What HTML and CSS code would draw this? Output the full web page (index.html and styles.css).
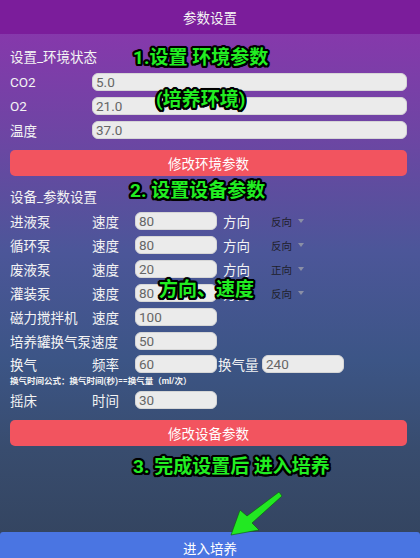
FILE: index.html
```html
<!DOCTYPE html>
<html lang="zh">
<head>
<meta charset="utf-8">
<title>参数设置</title>
<link rel="stylesheet" href="styles.css">
</head>
<body>
<div class="page">
  <header class="topbar">参数设置</header>
  <main class="content">
    <div class="section-title">设置_环境状态</div>
    <div class="env-row"><span class="lbl">CO2</span><div class="field grow">5.0</div></div>
    <div class="env-row"><span class="lbl">O2</span><div class="field grow">21.0</div></div>
    <div class="env-row"><span class="lbl">温度</span><div class="field grow">37.0</div></div>
    <div class="btn red">修改环境参数</div>

    <div class="section-title s2">设备_参数设置</div>
    <div class="dev-row"><span class="name">进液泵</span><span class="key">速度</span><div class="field sm">80</div><span class="dir">方向</span><span class="select">反向<span class="caret"></span></span></div>
    <div class="dev-row"><span class="name">循环泵</span><span class="key">速度</span><div class="field sm">80</div><span class="dir">方向</span><span class="select">反向<span class="caret"></span></span></div>
    <div class="dev-row"><span class="name">废液泵</span><span class="key">速度</span><div class="field sm">20</div><span class="dir">方向</span><span class="select">正向<span class="caret"></span></span></div>
    <div class="dev-row"><span class="name">灌装泵</span><span class="key">速度</span><div class="field sm">80</div><span class="dir">方向</span><span class="select">反向<span class="caret"></span></span></div>
    <div class="dev-row"><span class="name">磁力搅拌机</span><span class="key">速度</span><div class="field sm">100</div></div>
    <div class="dev-row"><span class="name wide">培养罐换气泵速度</span><div class="field sm">50</div></div>
    <div class="dev-row short"><span class="name">换气</span><span class="key">频率</span><div class="field sm">60</div><span class="amount">换气量</span><div class="field sm">240</div></div>
    <div class="formula">换气时间公式：换气时间(秒)==换气量（ml/次）</div>
    <div class="dev-row after"><span class="name">摇床</span><span class="key">时间</span><div class="field sm">30</div></div>
    <div class="btn red">修改设备参数</div>
  </main>
  <div class="enter">进入培养</div>

  <div class="note n1">1.设置 环境参数</div>
  <div class="note n2">(培养环境)</div>
  <div class="note n3">2. 设置设备参数</div>
  <div class="note n4">方向、速度</div>
  <div class="note n5">3. 完成设置后 进入培养</div>
  <svg class="arrow" width="420" height="558" viewBox="0 0 420 558">
    <polygon points="231,535 240,510 247,516 279,492 282,496 252,523 259,530" fill="#22e822" stroke="#0a5a0a" stroke-width="0.6" stroke-linejoin="round"/>
  </svg>
</div>
</body>
</html>
```

FILE: styles.css
```css
* { box-sizing: border-box; }
html, body { margin: 0; padding: 0; }
body {
  font-family: Roboto, "Noto Sans CJK SC", sans-serif;
  background: #33435d;
}
.page {
  position: relative;
  width: 420px;
  height: 558px;
  overflow: hidden;
  display: flex;
  flex-direction: column;
  background: linear-gradient(180deg, #8e34ae 0px, #6c46a3 140px, #4c5699 250px, #3c5586 360px, #384c6e 450px, #33435d 558px);
  color: #f4f4f4;
}
.topbar {
  height: 34px;
  background: #7b1d9b;
  display: flex;
  align-items: center;
  justify-content: center;
  font-size: 13.5px;
  color: #f4f4f4;
}
.content {
  padding: 11px 13px 0 10px;
  display: flex;
  flex-direction: column;
}
.section-title {
  height: 22px;
  display: flex;
  align-items: center;
  font-size: 13.5px;
}
.section-title.s2 {
  margin-top: 8px;
  height: 24px;
  margin-bottom: 1px;
}
.env-row, .dev-row {
  height: 24px;
  display: flex;
  align-items: center;
  font-size: 13.5px;
}
.section-title + .env-row { margin-top: 3px; }
.lbl { width: 82px; }
.field {
  height: 18px;
  border-radius: 6px;
  background: #ebebeb;
  border: 1px solid #d6d6d6;
  color: #666;
  font-size: 13.5px;
  line-height: 16px;
  padding-left: 3px;
  font-family: Roboto, "Noto Sans CJK SC", sans-serif;
}
.field.grow { flex: 1; }
.field.sm { width: 82px; }
.btn {
  height: 26px;
  border-radius: 5px;
  display: flex;
  align-items: center;
  justify-content: center;
  font-size: 13.5px;
  color: #fff;
  margin-top: 8px;
}
.btn.red { background: #f2545f; }
.name { width: 82px; white-space: nowrap; }
.name.wide { width: 125px; }
.key { width: 43px; }
.dir { margin-left: 6px; width: 48px; }
.select {
  font-size: 10.5px;
  color: #1e1e2a;
  display: flex;
  align-items: center;
}
.caret {
  display: block;
  flex: none;
  margin-left: 6px;
  width: 0;
  height: 0;
  border-left: 3px solid transparent;
  border-right: 3px solid transparent;
  border-top: 4px solid #8a8fa6;
}
.amount { margin-left: 1px; width: 44px; }
.dev-row.short { height: 22px; }
.formula {
  height: 12px;
  line-height: 12px;
  font-size: 8.5px;
  font-weight: bold;
  white-space: nowrap;
}
.dev-row.after { margin-top: 1px; }
.enter {
  margin-top: auto;
  height: 26px;
  background: #4a75e2;
  border-radius: 3px 3px 0 0;
  display: flex;
  align-items: center;
  justify-content: center;
  font-size: 13.5px;
  color: #fff;
  padding-top: 5px;
}
.note {
  position: absolute;
  height: 22px;
  line-height: 22px;
  font-size: 19px;
  font-weight: bold;
  color: #22ee22;
  white-space: nowrap;
  font-family: Roboto, "Noto Sans CJK SC", sans-serif;
  text-shadow:
    2px 0 0 #000, -2px 0 0 #000, 0 2px 0 #000, 0 -2px 0 #000,
    1.5px 1.5px 0 #000, -1.5px 1.5px 0 #000, 1.5px -1.5px 0 #000, -1.5px -1.5px 0 #000,
    1px 2px 0 #000, -1px 2px 0 #000, 1px -2px 0 #000, -1px -2px 0 #000,
    2px 1px 0 #000, -2px 1px 0 #000, 2px -1px 0 #000, -2px -1px 0 #000,
    0 0 3px #000;
}
.n1 { left: 133px; top: 47px; }
.n2 { left: 156px; top: 89px; }
.n3 { left: 130px; top: 180px; }
.n4 { left: 159px; top: 279px; }
.n5 { left: 133px; top: 456px; }
.arrow { position: absolute; left: 0; top: 0; pointer-events: none; }
```
